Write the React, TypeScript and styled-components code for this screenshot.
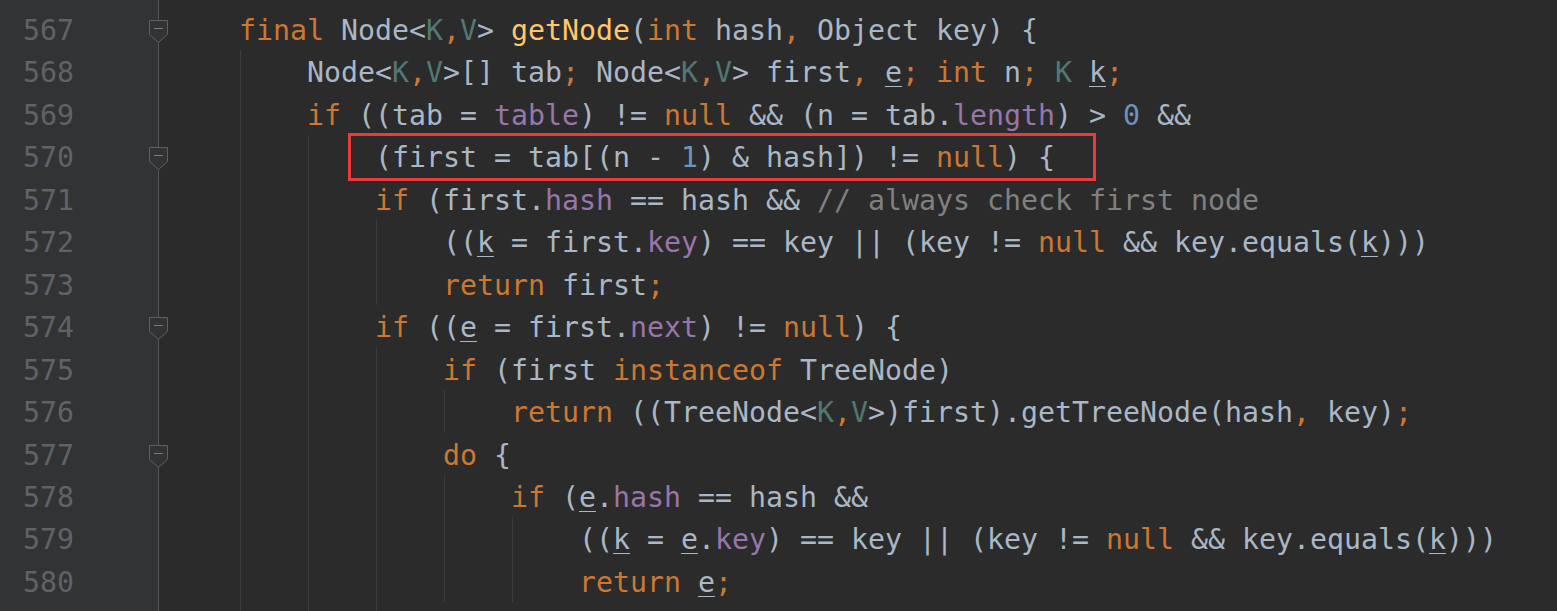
import React from "react";
import styled, { createGlobalStyle } from "styled-components";

const GlobalStyle = createGlobalStyle`
  html, body {
    margin: 0;
    padding: 0;
    background: #2b2b2b;
    overflow: hidden;
  }
  #root {
    width: 1557px;
    height: 611px;
    overflow: hidden;
  }
`;

const LINE_H = 42.46;

const Editor = styled.div`
  display: flex;
  width: 1557px;
  height: 611px;
  background: #2b2b2b;
  font-family: "DejaVu Sans Mono", "Liberation Mono", monospace;
  font-size: 28.24px;
  line-height: ${LINE_H}px;
  overflow: hidden;
`;

const Gutter = styled.div`
  flex: 0 0 158px;
  background: #313335;
  border-right: 1px solid #555555;
  padding-top: 8px;
`;

const GutterRow = styled.div`
  position: relative;
  display: flex;
  box-sizing: border-box;
  height: ${LINE_H}px;
  padding-top: 2px;
`;

const LineNumber = styled.span`
  width: 74px;
  text-align: right;
  color: #606366;
`;

const FoldMarker = styled.svg`
  position: absolute;
  left: 148px;
  top: 11px;
  width: 21px;
  height: 25px;
  z-index: 2;
`;

const CodeArea = styled.div`
  flex: 1;
  padding: 8px 0 0 12px;
  color: #a9b7c6;
`;

const CodeLine = styled.div`
  position: relative;
  box-sizing: border-box;
  height: ${LINE_H}px;
  padding-top: 2px;
  white-space: pre;
`;

const Guide = styled.span<{ $col: number }>`
  position: absolute;
  top: 0;
  bottom: 0;
  left: calc(${(p) => p.$col}ch + 1px);
  width: 1px;
  background: #3b3b3b;
`;

const Highlight = styled.div`
  position: absolute;
  left: 177px;
  top: -2px;
  width: 748px;
  height: 48px;
  box-sizing: border-box;
  border: 3px solid #ec3a3a;
  pointer-events: none;
`;

const colors: Record<string, string> = {
  k: "#cc7832",
  f: "#9876aa",
  m: "#ffc66d",
  t: "#507874",
  n: "#6897bb",
  c: "#808080",
  u: "#a9b7c6",
};

const Token = styled.span<{ $kind: string }>`
  color: ${(p) => colors[p.$kind] || "#a9b7c6"};
  ${(p) =>
    p.$kind === "u"
      ? `text-decoration: underline; text-decoration-thickness: 1px; text-underline-offset: 4px;`
      : ""}
`;

type Line = {
  no: number;
  indent: number;
  code: string;
  guides: number[];
  fold?: boolean;
  boxed?: boolean;
};

const lines: Line[] = [
  { no: 567, indent: 4, fold: true, guides: [], code: "«k|final» Node<«t|K»«k|,»«t|V»> «m|getNode»(«k|int» hash«k|,» Object key) {" },
  { no: 568, indent: 8, guides: [4], code: "Node<«t|K»«k|,»«t|V»>[] tab«k|;» Node<«t|K»«k|,»«t|V»> first«k|,» «u|e»«k|;» «k|int» n«k|;» «t|K» «u|k»«k|;»" },
  { no: 569, indent: 8, guides: [4], code: "«k|if» ((tab = «f|table») != «k|null» && (n = tab.«f|length») > «n|0» &&" },
  { no: 570, indent: 12, fold: true, boxed: true, guides: [4, 8], code: "(first = tab[(n - «n|1») & hash]) != «k|null») {" },
  { no: 571, indent: 12, guides: [4, 8], code: "«k|if» (first.«f|hash» == hash && «c|// always check first node»" },
  { no: 572, indent: 16, guides: [4, 8, 12], code: "((«u|k» = first.«f|key») == key || (key != «k|null» && key.equals(«u|k»)))" },
  { no: 573, indent: 16, guides: [4, 8, 12], code: "«k|return» first«k|;»" },
  { no: 574, indent: 12, fold: true, guides: [4, 8], code: "«k|if» ((«u|e» = first.«f|next») != «k|null») {" },
  { no: 575, indent: 16, guides: [4, 8, 12], code: "«k|if» (first «k|instanceof» TreeNode)" },
  { no: 576, indent: 20, guides: [4, 8, 12, 16], code: "«k|return» ((TreeNode<«t|K»«k|,»«t|V»>)first).getTreeNode(hash«k|,» key)«k|;»" },
  { no: 577, indent: 16, fold: true, guides: [4, 8, 12], code: "«k|do» {" },
  { no: 578, indent: 20, guides: [4, 8, 12, 16], code: "«k|if» («u|e».«f|hash» == hash &&" },
  { no: 579, indent: 24, guides: [4, 8, 12, 16, 20], code: "((«u|k» = «u|e».«f|key») == key || (key != «k|null» && key.equals(«u|k»)))" },
  { no: 580, indent: 24, guides: [4, 8, 12, 16, 20], code: "«k|return» «u|e»«k|;»" },
  { no: 581, indent: 16, guides: [4, 8, 12], code: "} «k|while» ((«u|e» = «u|e».«f|next») != «k|null»)«k|;»" },
];

function parse(code: string): { kind: string; text: string }[] {
  const out: { kind: string; text: string }[] = [];
  const re = /«(\w)\|([^»]*)»/g;
  let last = 0;
  let m: RegExpExecArray | null;
  while ((m = re.exec(code))) {
    if (m.index > last) out.push({ kind: "p", text: code.slice(last, m.index) });
    out.push({ kind: m[1], text: m[2] });
    last = m.index + m[0].length;
  }
  if (last < code.length) out.push({ kind: "p", text: code.slice(last) });
  return out;
}

const Fold = () => (
  <FoldMarker viewBox="0 0 21 25">
    <path d="M1.5 1.5 H19.5 V15.5 L10.5 23.5 L1.5 15.5 Z" fill="#313335" stroke="#5e5f60" strokeWidth="1" />
    <path d="M6 9.5 H15" stroke="#7a7b7c" strokeWidth="1" />
  </FoldMarker>
);

export default function App() {
  return (
    <>
      <GlobalStyle />
      <Editor>
        <Gutter>
          {lines.map((l) => (
            <GutterRow key={l.no}>
              <LineNumber>{l.no}</LineNumber>
              {l.fold && <Fold />}
            </GutterRow>
          ))}
        </Gutter>
        <CodeArea>
          {lines.map((l) => (
            <CodeLine key={l.no}>
              {l.guides.map((g) => (
                <Guide key={g} $col={g} />
              ))}
              {" ".repeat(l.indent)}
              {parse(l.code).map((t, i) => (
                <Token key={i} $kind={t.kind}>
                  {t.text}
                </Token>
              ))}
              {l.boxed && <Highlight />}
            </CodeLine>
          ))}
        </CodeArea>
      </Editor>
    </>
  );
}
